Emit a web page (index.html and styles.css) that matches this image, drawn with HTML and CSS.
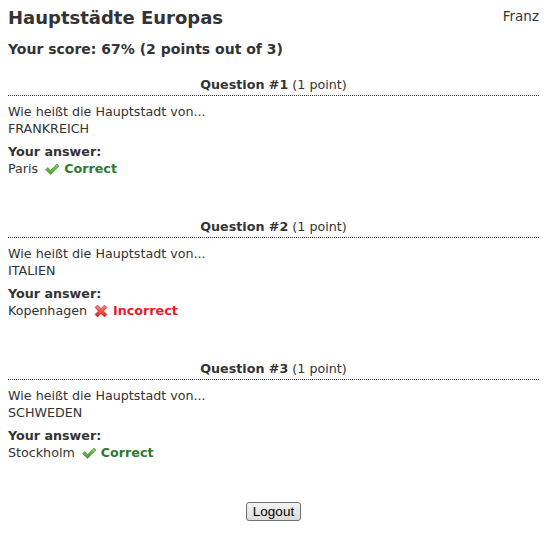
FILE: index.html
```html
<!DOCTYPE html>
<html>
<head>
<meta charset="utf-8">
<link rel="stylesheet" href="styles.css">
</head>
<body>
<div class="page">
  <header class="top">
    <h1 class="title">Hauptstädte Europas</h1>
    <div class="user">Franz</div>
  </header>
  <h2 class="score">Your score: 67% (2 points out of 3)</h2>

  <section class="question">
    <div class="qhead"><b>Question #1</b> (1 point)</div>
    <div class="qtext">Wie heißt die Hauptstadt von...<br>FRANKREICH</div>
    <div class="alabel">Your answer:</div>
    <div class="answer">Paris <span class="res ok"><svg class="ico" viewBox="0 0 16 16" width="16" height="16"><defs><linearGradient id="g1" x1="0" y1="0" x2="0" y2="1"><stop offset="0" stop-color="#8fd06a"/><stop offset="1" stop-color="#3f9a2c"/></linearGradient></defs><path d="M1.5 8.5 L4 6.5 L6.5 9.5 L13 3 L15 5 L6.5 13.5 Z" fill="url(#g1)" stroke="#3d8a2a" stroke-width="0.6" stroke-linejoin="round"/></svg>Correct</span></div>
  </section>

  <section class="question">
    <div class="qhead"><b>Question #2</b> (1 point)</div>
    <div class="qtext">Wie heißt die Hauptstadt von...<br>ITALIEN</div>
    <div class="alabel">Your answer:</div>
    <div class="answer">Kopenhagen <span class="res bad"><svg class="ico" viewBox="0 0 16 16" width="16" height="16"><defs><linearGradient id="g2" x1="0" y1="0" x2="0" y2="1"><stop offset="0" stop-color="#f58a8a"/><stop offset="1" stop-color="#d42424"/></linearGradient></defs><path d="M2 4.5 L4.5 2 L8 5.5 L11.5 2 L14 4.5 L10.5 8 L14 11.5 L11.5 14 L8 10.5 L4.5 14 L2 11.5 L5.5 8 Z" fill="url(#g2)" stroke="#c42020" stroke-width="0.6" stroke-linejoin="round"/></svg>Incorrect</span></div>
  </section>

  <section class="question">
    <div class="qhead"><b>Question #3</b> (1 point)</div>
    <div class="qtext">Wie heißt die Hauptstadt von...<br>SCHWEDEN</div>
    <div class="alabel">Your answer:</div>
    <div class="answer">Stockholm <span class="res ok"><svg class="ico" viewBox="0 0 16 16" width="16" height="16"><defs><linearGradient id="g3" x1="0" y1="0" x2="0" y2="1"><stop offset="0" stop-color="#8fd06a"/><stop offset="1" stop-color="#3f9a2c"/></linearGradient></defs><path d="M1.5 8.5 L4 6.5 L6.5 9.5 L13 3 L15 5 L6.5 13.5 Z" fill="url(#g3)" stroke="#3d8a2a" stroke-width="0.6" stroke-linejoin="round"/></svg>Correct</span></div>
  </section>

  <div class="actions"><button class="btn">Logout</button></div>
</div>
</body>
</html>
```

FILE: styles.css
```css
html, body {
  margin: 0;
  padding: 0;
  background: #fff;
}
body {
  font-family: "DejaVu Sans", Verdana, sans-serif;
  font-size: 12.7px;
  color: #333;
}
.page {
  padding: 8px 7px 8px 8px;
}
.top {
  display: flex;
  justify-content: space-between;
  align-items: flex-start;
}
.title {
  margin: 0;
  font-size: 18px;
  font-weight: bold;
  line-height: 20px;
}
.user {
  font-size: 13.5px;
  line-height: 17px;
}
.score {
  margin: 12px 0 0;
  font-size: 14px;
  font-weight: bold;
  line-height: 18px;
}
.question {
  margin-top: 18px;
  height: 129px;
}
.question + .question {
  margin-top: 13px;
}
.qhead {
  text-align: center;
  line-height: 17px;
  padding-bottom: 2px;
  border-bottom: 1px dotted #333;
}
.qtext {
  margin-top: 7px;
  line-height: 17px;
}
.alabel {
  margin-top: 6px;
  font-weight: bold;
  line-height: 17px;
}
.answer {
  line-height: 18px;
  display: flex;
  align-items: center;
  gap: 6px;
}
.res {
  display: inline-flex;
  align-items: center;
  gap: 4px;
  font-weight: bold;
}
.ok { color: #2d7b2d; }
.bad { color: #e8192c; }
.ico { display: block; }
.actions {
  text-align: center;
  margin-top: 13px;
}
.btn {
  font-family: "Liberation Sans", Arial, sans-serif;
  font-size: 13.5px;
  color: #000;
  padding: 1px 6px;
  border: 1px solid #707070;
  border-radius: 3px;
  background: linear-gradient(#f4f4f4, #dcdcdc);
}
```
